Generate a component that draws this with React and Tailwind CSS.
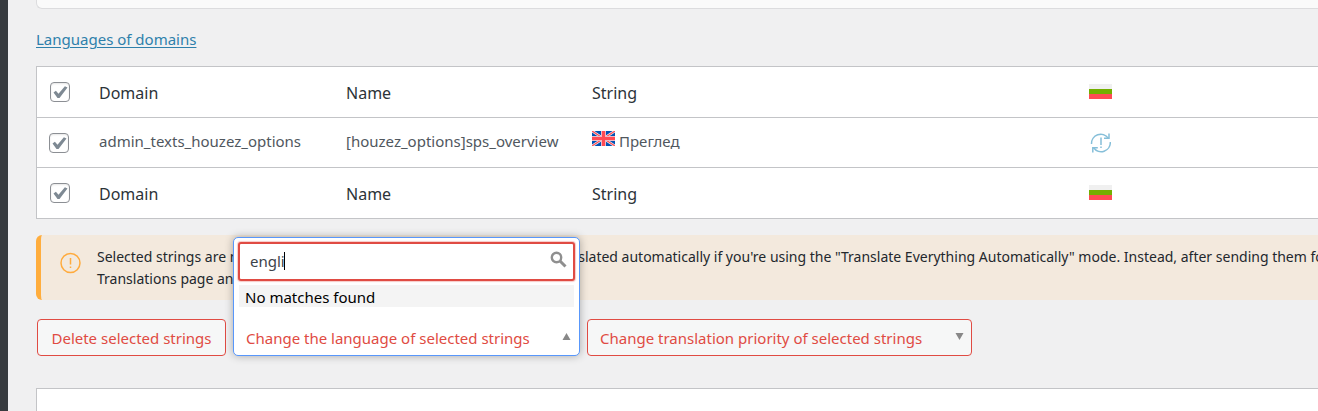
import React, { useState } from 'react';

const BulgarianFlag = () => (
  <svg width="23" height="15" viewBox="0 0 23 15" role="img" aria-label="Bulgarian" shapeRendering="crispEdges">
    <rect width="23" height="5" fill="#f0f0f0" />
    <rect y="5" width="23" height="5" fill="#73af00" />
    <rect y="10" width="23" height="5" fill="#ff4b55" />
  </svg>
);

const BritishFlag = () => (
  <svg width="23" height="15" viewBox="0 0 23 15" role="img" aria-label="English">
    <rect width="23" height="15" fill="#0052b4" />
    <path d="M0 0L23 15M23 0L0 15" stroke="#f0f0f0" strokeWidth="2.6" />
    <path d="M0 0L23 15M23 0L0 15" stroke="#ff4b55" strokeWidth="1.2" />
    <path d="M11.5 0V15M0 7.5H23" stroke="#f0b8c4" strokeWidth="5" />
    <path d="M11.5 0V15M0 7.5H23" stroke="#ff4b55" strokeWidth="3" />
  </svg>
);

const NeedsUpdateIcon = () => (
  <svg width="22" height="22" viewBox="0 0 22 22" fill="none" stroke="#86bfd9" strokeWidth="1.5" role="img" aria-label="Needs update">
    <path d="M2.5 12A9.2 9.2 0 0 1 19.2 6.2" />
    <path d="M20 1.5V6.2H15" />
    <path d="M21.3 10A9.2 9.2 0 0 1 4.6 15.8" />
    <path d="M3.8 20.5V15.8H8.8" />
    <path d="M12 5.5V13M12 14.5V16" />
  </svg>
);

const WarningIcon = () => (
  <svg width="22" height="22" viewBox="0 0 22 22" fill="none" stroke="#ffab3d" strokeWidth="1.5" aria-hidden="true">
    <circle cx="11.5" cy="11" r="9.5" />
    <path d="M11.5 6V12.5M11.5 14.5V16" />
  </svg>
);

const SearchIcon = () => (
  <svg width="17" height="17" viewBox="0 0 17 17" fill="none" stroke="#8f8f8f" aria-hidden="true">
    <circle cx="6.5" cy="6.5" r="4.7" strokeWidth="2.4" />
    <path d="M10 10L15.5 15.5" strokeWidth="3" />
  </svg>
);

const Checkbox = ({ label }) => (
  <span className="relative block w-5 h-5">
    <input
      type="checkbox"
      defaultChecked
      aria-label={label}
      className="peer block appearance-none w-5 h-5 rounded border border-[#8c8f94] bg-white shadow-[inset_0_1px_2px_rgba(0,0,0,0.1)]"
    />
    <svg
      width="20"
      height="20"
      viewBox="0 0 20 20"
      aria-hidden="true"
      className="absolute inset-0 hidden peer-checked:block pointer-events-none"
    >
      <path d="M3.5 10.6L5.9 8.8L8.5 11.8L14.9 4.2L17.5 5.4L9.5 16H7.5Z" fill="#7e8993" />
    </svg>
  </span>
);

const HeadRow = ({ last }) => {
  const cell = `px-3 text-left font-normal ${last ? 'h-[50px]' : 'h-[51px] border-b border-[#c3c4c7]'}`;
  return (
    <tr className="text-base text-[#2c3338]">
      <td className={`${cell} pl-[13px]`}><Checkbox label="Select all strings" /></td>
      <th className={`${cell} pt-[2px]`}>Domain</th>
      <th className={`${cell} pt-[2px]`}>Name</th>
      <th className={`${cell} pt-[2px]`}>String</th>
      <th className={`${cell} pb-[2px]`}><BulgarianFlag /></th>
    </tr>
  );
};

const App = () => {
  const [query, setQuery] = useState('engli');
  const bodyCell = 'h-[50px] px-3 border-b border-[#c3c4c7]';

  return (
    <div className="flex min-h-screen overflow-hidden bg-[#f0f0f1] text-[15px] font-['Noto_Sans','Open_Sans',sans-serif]">
      <aside className="w-2 shrink-0 bg-[#373b3f]" />

      <main className="flex flex-col flex-1 min-w-0 pl-7">
        <div className="h-[9px] rounded-bl-md border-b border-l border-[#dcdcde] bg-[#fafafa]" />

        <div className="mt-[19px] mb-4 leading-[22px]">
          <a href="#domains" className="text-[#2e80ab] underline underline-offset-2">Languages of domains</a>
        </div>

        {/* Strings table */}
        <div className="border border-r-0 border-[#c3c4c7] bg-white">
          <table className="w-full table-fixed border-separate border-spacing-0">
            <colgroup>
              <col className="w-[50px]" />
              <col className="w-[247px]" />
              <col className="w-[246px]" />
              <col className="w-[497px]" />
              <col />
            </colgroup>
            <thead>
              <HeadRow />
            </thead>
            <tbody>
              <tr className="leading-5 text-[#50575e]">
                <td className={bodyCell}><Checkbox label="Select string" /></td>
                <td className={`${bodyCell} pb-1`}>admin_texts_houzez_options</td>
                <td className={`${bodyCell} pb-1`}>[houzez_options]sps_overview</td>
                <td className={`${bodyCell} pb-1`}>
                  <span className="flex items-start gap-1">
                    <BritishFlag />
                    Преглед
                  </span>
                </td>
                <td className={bodyCell}><NeedsUpdateIcon /></td>
              </tr>
            </tbody>
            <tfoot>
              <HeadRow last />
            </tfoot>
          </table>
        </div>

        {/* Notice */}
        <div className="flex mt-4 h-[65px] overflow-hidden rounded-l-md border-l-[5px] border-[#ffad3d] bg-[#f3e9dd] text-[#23282d]">
          <div className="w-14 shrink-0 pl-[18px] pt-[17px]">
            <WarningIcon />
          </div>
          <p className="pt-[11px] text-sm leading-[22px] whitespace-nowrap">
            Selected strings are not in the default languages and they will not be translated automatically if you're using the "Translate Everything Automatically" mode. Instead, after sending them for translation, go to the
            <br />
            Translations page and translate them there.
          </p>
        </div>

        {/* Bulk actions */}
        <div className="flex gap-[7px] mt-[19px] pl-px">
          <button
            type="button"
            className="h-[37px] w-[189px] pt-[2px] rounded border border-[#e04b43] bg-[#f6f7f7] whitespace-nowrap text-[#e04b43]"
          >
            Delete selected strings
          </button>

          <div className="relative w-[347px] h-[37px]">
            <div className="absolute bottom-0 inset-x-0 rounded-[5px] border border-[#5897fb] bg-white shadow-[0_0_8px_rgba(0,0,0,0.3)]">
              <div className="relative m-1">
                <input
                  type="text"
                  value={query}
                  onChange={(e) => setQuery(e.target.value)}
                  aria-label="Search languages"
                  className="block w-full h-[39px] rounded-[3px] border-2 border-[#e04b43] bg-white pl-[10px] pr-9 pb-[2px] text-[#3c434a] outline-none shadow-[0_0_1px_1px_rgba(224,75,67,0.3)]"
                />
                <span className="absolute left-[46px] top-[10px] w-px h-[18px] bg-black" />
                <span className="absolute right-2 top-[9px]">
                  <SearchIcon />
                </span>
              </div>
              <ul className="mx-[5px] h-[26px]">
                <li className="h-[22px] px-[6px] bg-[#f4f4f4] text-black leading-6">No matches found</li>
              </ul>
              <button
                type="button"
                aria-haspopup="listbox"
                aria-expanded="true"
                className="flex items-center justify-between mt-1 w-full h-10 pl-3 pr-2 pt-[7px] whitespace-nowrap text-[#e04b43]"
              >
                Change the language of selected strings
                <svg width="9" height="8" viewBox="0 0 9 8" aria-hidden="true" className="mb-1">
                  <path d="M4.5 0L8.5 7H0.5Z" fill="#888" />
                </svg>
              </button>
            </div>
          </div>

          <div className="relative w-[385px]">
            <select
              aria-label="Translation priority"
              className="block appearance-none w-full h-[37px] pl-3 pt-[2px] rounded border border-[#e04b43] bg-[#f6f7f7] text-[#e04b43]"
            >
              <option>Change translation priority of selected strings</option>
            </select>
            <svg width="9" height="8" viewBox="0 0 9 8" aria-hidden="true" className="absolute right-2 top-[14px] pointer-events-none">
              <path d="M0.5 0H8.5L4.5 7Z" fill="#888" />
            </svg>
          </div>
        </div>

        <div className="flex-1 mt-8 border-t border-l border-[#c3c4c7] bg-white" />
      </main>
    </div>
  );
};

export default App;
